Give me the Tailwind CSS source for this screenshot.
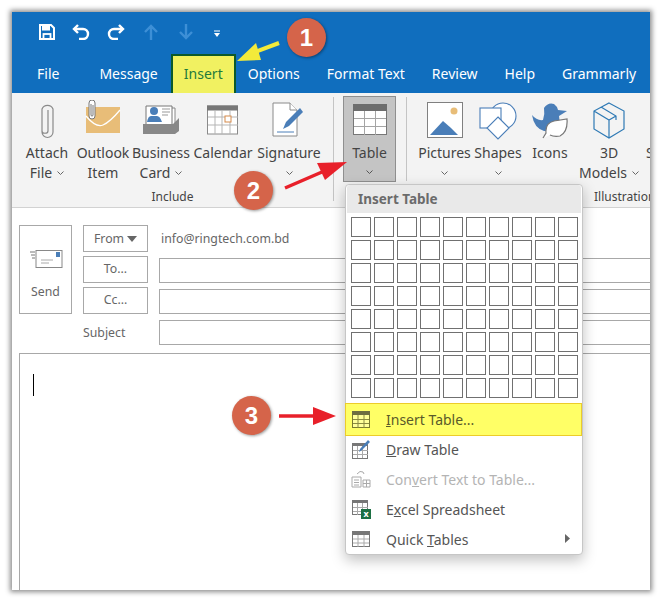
<!DOCTYPE html>
<html><head><meta charset="utf-8"><script src="https://cdn.jsdelivr.net/npm/@tailwindcss/browser@4"></script></head>
<body class="bg-white">
<div class="relative w-[663px] h-[603px] bg-white overflow-hidden font-['Noto_Sans',sans-serif] pt-[12px] pl-[12px]">
<div class="w-[638px] h-[578px] bg-white shadow-[0_0_5px_2px_rgba(0,0,0,0.45)] overflow-hidden flex flex-col">
  <!-- title -->
  <div class="h-[42px] bg-[#106ebe] flex items-center pl-[27px] gap-[17px] shrink-0 pb-[2px]">
    <svg width="16" height="16" viewBox="0 0 16 16"><path d="M1 1h11l3 3v11H1z" fill="none" stroke="#fff" stroke-width="2"/><rect x="3" y="1.500" width="8" height="5" fill="#fff"/><rect x="4.500" y="10" width="7" height="5" fill="none" stroke="#fff" stroke-width="1.800"/></svg>
    <svg width="18" height="16" viewBox="0 0 18 16" fill="none" stroke="#fff" stroke-width="2.400"><path d="M6 1 2 5l4 4"/><path d="M2 5h9a5 5 0 0 1 0 10H7"/></svg>
    <svg width="18" height="16" viewBox="0 0 18 16" fill="none" stroke="#fff" stroke-width="2.400"><path d="M12 1l4 4-4 4"/><path d="M16 5H7a5 5 0 0 0 0 10h4"/></svg>
    <svg width="18" height="16" viewBox="0 0 18 16" fill="none" stroke="#3d8fd6" stroke-width="2.400"><path d="M3 8l6-6 6 6M9 2v14"/></svg>
    <svg width="18" height="16" viewBox="0 0 18 16" fill="none" stroke="#3d8fd6" stroke-width="2.400"><path d="M3 8l6 6 6-6M9 14V0"/></svg>
    <svg width="8" height="8" viewBox="0 0 8 8" class="ml-[1px] mt-[3px]"><path d="M1 1h6" stroke="#fff"/><path d="M1 3h6L4 7z" fill="#fff"/></svg>
  </div>
  <!-- tabs -->
  <div class="h-[39px] bg-[#106ebe] flex items-end text-white text-[14px] leading-[24px] pl-[25px] shrink-0 whitespace-nowrap">
    <div class="h-[31px] mr-[40px]">File</div>
    <div class="h-[31px] mr-[13px]">Message</div>
    <div class="h-[39px] w-[65px] mr-[12px] bg-[#f1f161] border-2 border-b-0 border-[#0b5a2b] text-[#1f7a3c] text-center pt-[6px]">Insert</div>
    <div class="h-[31px] mr-[27px]">Options</div>
    <div class="h-[31px] mr-[27px]">Format Text</div>
    <div class="h-[31px] mr-[27px]">Review</div>
    <div class="h-[31px] mr-[27px]">Help</div>
    <div class="h-[31px]">Grammarly</div>
  </div>
  <!-- ribbon -->
  <div class="h-[115px] bg-[#f3f3f3] border-b border-[#d2d2d2] flex shrink-0 text-[14px] leading-[20px] text-[#444] whitespace-nowrap overflow-hidden">
    <div class="w-[321px] flex flex-col shrink-0">
      <div class="flex pl-[10px] h-[94px]">
        <div class="w-[50px] flex flex-col items-center">
          <svg class="mt-[9px]" width="16" height="38" viewBox="0 0 16 38" fill="none" stroke="#8a8a8a" stroke-width="1.200"><path d="M3 9v21a5.500 5.500 0 0 0 11 0V7a6 6 0 0 0-11 0v22c0 3 6 3 6 0V8"/></svg>
          <div class="mt-[3px] text-center">Attach<br><span class="inline-flex items-center gap-[5px]">File<svg width="7" height="4" viewBox="0 0 7 4" fill="none" stroke="#666"><path d="M0.500 0.500l3 3 3-3"/></svg></span></div>
        </div>
        <div class="w-[62px] flex flex-col items-center">
          <svg class="mt-[7px]" width="36" height="40" viewBox="0 0 36 40"><rect x="1" y="7" width="34" height="26" fill="#e8bd78"/><path d="M1 16q10 12 17 9T35 10" fill="none" stroke="#fff" stroke-width="1.300"/><path d="M4 3v13a3 3 0 0 0 6 0V3a2.500 2.500 0 0 0-6 0z" fill="#fff" stroke="#777"/><path d="M6 4v11c0 1.500 2 1.500 2 0V5" fill="none" stroke="#777"/></svg>
          <div class="mt-[3px] text-center">Outlook<br>Item</div>
        </div>
        <div class="w-[54px] flex flex-col items-center">
          <svg class="mt-[9px]" width="36" height="38" viewBox="0 0 36 38"><path d="M6 6h26v20H6z" fill="#fff" stroke="#888"/><path d="M3 4h26v22H3z" fill="#fff" stroke="#777"/><circle cx="11" cy="9" r="4" fill="#4a7eb8"/><path d="M4 20q1-6 4-6h6q3 0 5 6z" fill="#4a7eb8"/><path d="M19 7h8M19 10h8M19 13h6" stroke="#999"/><path d="M0 22h30l6-6v13l-4 3H0z" fill="#888"/></svg>
          <div class="mt-[3px] text-center">Business<br><span class="inline-flex items-center gap-[5px]">Card<svg width="7" height="4" viewBox="0 0 7 4" fill="none" stroke="#666"><path d="M0.500 0.500l3 3 3-3"/></svg></span></div>
        </div>
        <div class="w-[70px] flex flex-col items-center">
          <svg class="mt-[9px]" width="32" height="38" viewBox="0 0 32 38"><rect x="0.500" y="4" width="30" height="28" fill="#fff" stroke="#8a8a8a"/><rect x="0" y="3.500" width="31" height="5" fill="#777"/><path d="M8 8v24M15 8v24M23 8v24M1 15h30M1 23h30" stroke="#b5b5b5"/><rect x="18" y="14" width="6" height="6" fill="#fff" stroke="#d58a4a"/></svg>
          <div class="mt-[3px] text-center">Calendar</div>
        </div>
        <div class="w-[62px] flex flex-col items-center">
          <svg class="mt-[9px]" width="34" height="38" viewBox="0 0 34 38"><path d="M1 1h17l7 7v26H1z" fill="#fff" stroke="#8a8a8a"/><path d="M18 1v7h7" fill="#fff" stroke="#8a8a8a"/><path d="M5 30h17" stroke="#4a7eb8"/><path d="M11 27l3-7L28 6l3 4-14 14z" fill="#4a7eb8"/></svg>
          <div class="mt-[3px] text-center">Signature</div>
          <svg class="mt-[8px]" width="7" height="4" viewBox="0 0 7 4" fill="none" stroke="#666"><path d="M0.500 0.500l3 3 3-3"/></svg>
        </div>
      </div>
      <div class="text-center text-[12px] leading-[14px] mt-[3px]">Include</div>
    </div>
    <div class="w-px h-[104px] mt-[4px] bg-[#c4c4c4] shrink-0"></div>
    <div class="w-[9px] shrink-0"></div>
    <div class="w-[53px] h-[86px] mt-[3px] bg-[#c4c4c4] border border-[#8f8f8f] flex flex-col items-center shrink-0">
      <svg class="mt-[7px]" width="34" height="32" viewBox="0 0 34 32"><rect x="0.500" y="0.500" width="33" height="30" fill="#fff" stroke="#777"/><rect x="0" y="0" width="34" height="7" fill="#6d6d6d"/><path d="M11.500 7v24M22.500 7v24M1 14.500h32M1 22.500h32" stroke="#a5a5a5"/></svg>
      <div class="mt-[7px]">Table</div>
      <svg class="mt-[7px]" width="7" height="4" viewBox="0 0 7 4" fill="none" stroke="#555"><path d="M0.500 0.500l3 3 3-3"/></svg>
    </div>
    <div class="w-[10px] shrink-0"></div>
    <div class="w-px h-[84px] mt-[4px] bg-[#c4c4c4] shrink-0"></div>
    <div class="flex flex-col flex-1 min-w-0">
      <div class="flex h-[94px]">
        <div class="w-[75px] flex flex-col items-center shrink-0">
          <svg class="mt-[9px]" width="36" height="38" viewBox="0 0 36 38"><rect x="0.500" y="0.500" width="35" height="35" fill="#fff" stroke="#808080"/><circle cx="27" cy="9" r="3.500" fill="#e8bd78"/><path d="M3 33l13-14 8 7 7 7z" fill="#4a7eb8"/></svg>
          <div class="mt-[3px] text-center">Pictures</div>
          <svg class="mt-[8px]" width="7" height="4" viewBox="0 0 7 4" fill="none" stroke="#666"><path d="M0.500 0.500l3 3 3-3"/></svg>
        </div>
        <div class="w-[32px] flex flex-col items-center shrink-0">
          <svg class="mt-[9px] shrink-0" width="38" height="38" viewBox="0 0 38 38" fill="#fff" stroke="#4a7eb8" stroke-width="1.100"><circle cx="24" cy="14" r="13"/><rect x="1" y="6" width="21" height="20"/><path d="M19 15l11 11-11 11L8 26z"/></svg>
          <div class="mt-[3px] text-center">Shapes</div>
          <svg class="mt-[8px]" width="7" height="4" viewBox="0 0 7 4" fill="none" stroke="#666"><path d="M0.500 0.500l3 3 3-3"/></svg>
        </div>
        <div class="w-[72px] flex flex-col items-center shrink-0">
          <svg class="mt-[9px]" width="36" height="38" viewBox="0 0 36 38"><path d="M0 13q5 6 11 5 2-6 1-12 4-6 10-4 3 2 4 6l9 1-8 5 1 8q-5 8-16 7Q2 26 0 13z" fill="#4a7eb8"/><path d="M11 36l3-5q-1-10 8-12l13-2q1 13-7 17-6 1-10-1" fill="#fff" stroke="#777" stroke-width="1.200"/></svg>
          <div class="mt-[3px] text-center">Icons</div>
        </div>
        <div class="w-[46px] flex flex-col items-center shrink-0">
          <svg class="mt-[9px]" width="32" height="38" viewBox="0 0 32 38" fill="none" stroke="#2f7ab5" stroke-width="1.200"><path d="M16 1 31 9v18l-15 9L1 27V9zM1 9l15 9 7-4M16 18v18M8 5l15 9v4"/></svg>
          <div class="mt-[3px] text-center">3D<br><span class="inline-flex items-center gap-[5px]">Models<svg width="7" height="4" viewBox="0 0 7 4" fill="none" stroke="#666"><path d="M0.500 0.500l3 3 3-3"/></svg></span></div>
        </div>
        <div class="w-[30px] ml-[14px] shrink-0 pt-[50px]">S</div>
      </div>
      <div class="text-[12px] leading-[14px] mt-[3px] pl-[187px]">Illustrations</div>
    </div>
  </div>
  <!-- compose -->
  <div class="flex-1 bg-white relative pl-[7px] pt-[17px] text-[12.300px] text-[#666]">
    <div class="flex">
      <div class="w-[53px] h-[89px] border border-[#a8a8a8] flex flex-col items-center shrink-0">
        <svg class="mt-[23px]" width="34" height="20" viewBox="0 0 34 20"><path d="M1 3h5M2 6h4M3 9h3" stroke="#777"/><rect x="7" y="1.500" width="26" height="17" fill="#fff" stroke="#888"/><rect x="27" y="3" width="4" height="5" fill="#4a7eb8"/><path d="M12 11h12M12 14h8" stroke="#aaa"/></svg>
        <div class="mt-[14px]">Send</div>
      </div>
      <div class="w-[65px] ml-[11px] flex flex-col gap-[4px] shrink-0">
        <div class="h-[27px] border border-[#a8a8a8] flex items-center justify-center gap-[3px] pt-[1px]">From <svg width="10" height="6" viewBox="0 0 10 6"><path d="M0 0h10L5 6z" fill="#666"/></svg></div>
        <div class="h-[27px] border border-[#a8a8a8] flex items-center justify-center">To...</div>
        <div class="h-[27px] border border-[#a8a8a8] flex items-center justify-center">Cc...</div>
        <div class="h-[25px] mt-[3px] flex items-center">Subject</div>
      </div>
      <div class="ml-[11px] flex-1 flex flex-col gap-[6px] -mr-[8px]">
        <div class="h-[27px] pl-[2px] leading-[27px]">info@ringtech.com.bd</div>
        <div class="h-[25px] border border-[#a8a8a8]"></div>
        <div class="h-[25px] border border-[#a8a8a8]"></div>
        <div class="h-[25px] border border-[#a8a8a8]"></div>
      </div>
    </div>
    <div class="mt-[7px] -mr-[8px] h-[260px] border border-[#a8a8a8] pl-[13px] pt-[20px]">
      <div class="w-px h-[22px] bg-black"></div>
    </div>
  </div>
</div>

<!-- dropdown -->
<div class="absolute left-[345px] top-[184px] w-[238px] h-[371px] bg-white border border-[#c6c6c6] rounded-[4px] shadow-[0_5px_14px_rgba(0,0,0,0.25)] text-[14px] text-[#555]">
  <div class="h-[28px] mx-[1px] bg-[#e9e9e9] rounded-t-[3px] pl-[11px] font-bold text-[#6b6b6b] text-[13.500px] leading-[28px]">Insert Table</div>
  <div class="grid grid-cols-[repeat(10,20px)] grid-rows-[repeat(8,20px)] gap-[3px] pl-[5px] pt-[4px]">
    <div class="border border-[#707070]"></div><div class="border border-[#707070]"></div><div class="border border-[#707070]"></div><div class="border border-[#707070]"></div><div class="border border-[#707070]"></div><div class="border border-[#707070]"></div><div class="border border-[#707070]"></div><div class="border border-[#707070]"></div><div class="border border-[#707070]"></div><div class="border border-[#707070]"></div>
    <div class="border border-[#707070]"></div><div class="border border-[#707070]"></div><div class="border border-[#707070]"></div><div class="border border-[#707070]"></div><div class="border border-[#707070]"></div><div class="border border-[#707070]"></div><div class="border border-[#707070]"></div><div class="border border-[#707070]"></div><div class="border border-[#707070]"></div><div class="border border-[#707070]"></div>
    <div class="border border-[#707070]"></div><div class="border border-[#707070]"></div><div class="border border-[#707070]"></div><div class="border border-[#707070]"></div><div class="border border-[#707070]"></div><div class="border border-[#707070]"></div><div class="border border-[#707070]"></div><div class="border border-[#707070]"></div><div class="border border-[#707070]"></div><div class="border border-[#707070]"></div>
    <div class="border border-[#707070]"></div><div class="border border-[#707070]"></div><div class="border border-[#707070]"></div><div class="border border-[#707070]"></div><div class="border border-[#707070]"></div><div class="border border-[#707070]"></div><div class="border border-[#707070]"></div><div class="border border-[#707070]"></div><div class="border border-[#707070]"></div><div class="border border-[#707070]"></div>
    <div class="border border-[#707070]"></div><div class="border border-[#707070]"></div><div class="border border-[#707070]"></div><div class="border border-[#707070]"></div><div class="border border-[#707070]"></div><div class="border border-[#707070]"></div><div class="border border-[#707070]"></div><div class="border border-[#707070]"></div><div class="border border-[#707070]"></div><div class="border border-[#707070]"></div>
    <div class="border border-[#707070]"></div><div class="border border-[#707070]"></div><div class="border border-[#707070]"></div><div class="border border-[#707070]"></div><div class="border border-[#707070]"></div><div class="border border-[#707070]"></div><div class="border border-[#707070]"></div><div class="border border-[#707070]"></div><div class="border border-[#707070]"></div><div class="border border-[#707070]"></div>
    <div class="border border-[#707070]"></div><div class="border border-[#707070]"></div><div class="border border-[#707070]"></div><div class="border border-[#707070]"></div><div class="border border-[#707070]"></div><div class="border border-[#707070]"></div><div class="border border-[#707070]"></div><div class="border border-[#707070]"></div><div class="border border-[#707070]"></div><div class="border border-[#707070]"></div>
    <div class="border border-[#707070]"></div><div class="border border-[#707070]"></div><div class="border border-[#707070]"></div><div class="border border-[#707070]"></div><div class="border border-[#707070]"></div><div class="border border-[#707070]"></div><div class="border border-[#707070]"></div><div class="border border-[#707070]"></div><div class="border border-[#707070]"></div><div class="border border-[#707070]"></div>
  </div>
  <div class="mt-[5px] -mx-[1px]">
    <div class="h-[33px] bg-[#ffff66] border border-[#eccc2a] flex items-center pl-[6px] mb-[-2px] mr-[1px]">
      <svg width="18" height="17" viewBox="0 0 18 17"><rect x="0.500" y="0.500" width="17" height="16" fill="#ffff9a" stroke="#7a7a30"/><rect width="18" height="4" fill="#6d6d40"/><path d="M6 4v13M12 4v13M1 8.500h16M1 12.500h16" stroke="#8a8a40"/></svg>
      <div class="ml-[16px] text-[#5a5a2a]"><span class="underline">I</span>nsert Table...</div>
    </div>
    <div class="h-[30px] flex items-center pl-[7px]">
      <svg width="18" height="19" viewBox="0 0 18 19"><rect x="0.500" y="3.500" width="15" height="15" fill="#fff" stroke="#777"/><rect y="3" width="16" height="3" fill="#777"/><path d="M5.500 6v12M10.500 6v12M1 10.500h15M1 14.500h15" stroke="#aaa"/><path d="M7 12l1-3 8-9 2 2-8 8z" fill="#4a7eb8"/></svg>
      <div class="ml-[16px]"><span class="underline">D</span>raw Table</div>
    </div>
    <div class="h-[30px] flex items-center pl-[6px]">
      <svg width="20" height="18" viewBox="0 0 20 18" fill="none" stroke="#aaa"><path d="M1 7h9v10H1zM3 10h5M3 12.500h5M3 15h5M12 10h7v7h-7zM12 13.500h7M15.500 10v7M6 4q3-4 6-2l1 2"/></svg>
      <div class="ml-[15px] text-[#b4b4b4]">Con<span class="underline">v</span>ert Text to Table...</div>
    </div>
    <div class="h-[30px] flex items-center pl-[7px]">
      <div class="relative w-[19px] h-[19px] shrink-0">
        <svg width="16" height="15" viewBox="0 0 16 15"><rect x="0.500" y="0.500" width="15" height="14" fill="#fff" stroke="#777"/><rect width="16" height="3" fill="#777"/><path d="M5.500 3v12M10.500 3v12M1 7.500h15M1 11.500h15" stroke="#aaa"/></svg>
        <div class="absolute right-0 bottom-0 w-[10px] h-[10px] bg-[#1d7044] text-white text-[9px] leading-[9px] text-center font-bold">x</div>
      </div>
      <div class="ml-[15px]">E<span class="underline">x</span>cel Spreadsheet</div>
    </div>
    <div class="h-[30px] flex items-center pl-[7px] relative">
      <svg width="18" height="16" viewBox="0 0 18 16"><rect x="0.500" y="0.500" width="17" height="15" fill="#fff" stroke="#777"/><rect width="18" height="4" fill="#777"/><path d="M6 4v12M12 4v12M1 8h16M1 12h16" stroke="#aaa"/></svg>
      <div class="ml-[16px]">Quick <span class="underline">T</span>ables</div>
      <svg class="absolute right-[13px] top-[10px]" width="5" height="9" viewBox="0 0 5 9"><path d="M0 0l5 4.500L0 9z" fill="#666"/></svg>
    </div>
  </div>
</div>

<!-- annotations -->
<svg class="absolute left-0 top-0 pointer-events-none" width="663" height="603" viewBox="0 0 663 603">
  <path d="M279 43 252 53" stroke="#f3ea3a" stroke-width="4"/><path d="M237 61 256 43l5 17z" fill="#f3ea3a"/>
  <path d="M285 188 322 172" stroke="#e8202a" stroke-width="3.500"/><path d="M347 162 317 163l8 17z" fill="#e8202a"/>
  <path d="M279 416h36" stroke="#e8202a" stroke-width="3.500"/><path d="M336 416 313 407v18z" fill="#e8202a"/>
</svg>
<div class="absolute left-[287px] top-[18px] w-[39px] h-[39px] rounded-full bg-[#d5644a] shadow-[1px_1px_3px_rgba(0,0,0,0.4)] text-white font-bold text-[24px] leading-[39px] text-center font-['Liberation_Sans',sans-serif]">1</div>
<div class="absolute left-[234px] top-[171px] w-[39px] h-[39px] rounded-full bg-[#d5644a] shadow-[1px_1px_3px_rgba(0,0,0,0.4)] text-white font-bold text-[24px] leading-[39px] text-center font-['Liberation_Sans',sans-serif]">2</div>
<div class="absolute left-[232px] top-[396px] w-[39px] h-[39px] rounded-full bg-[#d5644a] shadow-[1px_1px_3px_rgba(0,0,0,0.4)] text-white font-bold text-[24px] leading-[39px] text-center font-['Liberation_Sans',sans-serif]">3</div>
</div>
</body></html>
